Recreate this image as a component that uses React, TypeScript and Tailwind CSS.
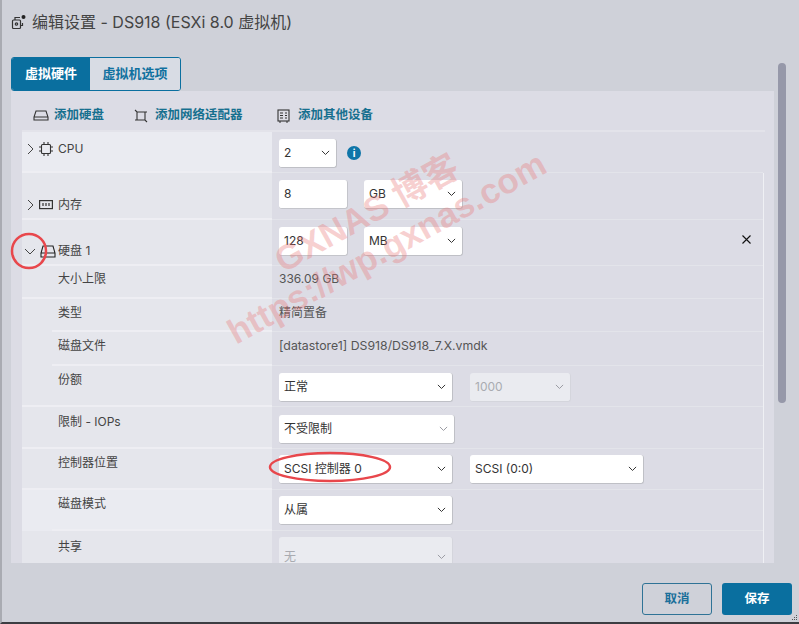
import React from "react";

const Chev = ({ cls = "text-[#333]", size = 9 }: { cls?: string; size?: number }) => (
  <svg width={size} height={size * 0.6} viewBox="0 0 10 6" fill="none" stroke="currentColor" strokeWidth="1.1" className={cls}>
    <path d="M1 1l4 4 4-4" />
  </svg>
);

const Sel = ({ w, v, disabled, h = "h-[29px]", light }: { w: string; v: string; disabled?: boolean; h?: string; light?: boolean }) => (
  <div className={`${w} ${h} shrink-0 flex items-center justify-between pl-[5px] pr-[6px] rounded-[3px] text-[12px] border-b border-r ${disabled ? "bg-[#eaebf0] text-[#a9abb1] border-[#d4d5dc]" : "bg-white text-[#333] border-[#bfc0c6]"}`}>
    <span>{v}</span>
    <Chev cls={disabled || light ? "text-[#9a9ba2]" : "text-[#333]"} />
  </div>
);

const Input = ({ v }: { v: string }) => (
  <div className="w-[69px] h-[29px] shrink-0 flex items-center pl-[5px] rounded-[3px] bg-white text-[12px] text-[#333] border-b border-r border-[#c4c5cb]">{v}</div>
);

const Right = ({ children, pt, gap = "gap-[17px]" }: { children: React.ReactNode; pt: string; gap?: string }) => (
  <div className={`flex-1 flex items-start pl-[7px] ${pt} ${gap}`}>{children}</div>
);

const Row = ({ label, h, line, labelPt, right, icon, arrow, lighter, noEdge }: {
  label: string; h: string; line?: "full" | "sub"; labelPt: string; right: React.ReactNode; icon?: React.ReactNode; arrow?: "r" | "d"; lighter?: boolean; noEdge?: boolean;
}) => (
  <div className={`flex ${h} shrink-0 relative border-r ${noEdge ? "border-transparent" : "border-[#eff0f4]"}`}>
    <div className={`w-[250px] shrink-0 flex items-start ${lighter ? "bg-[#eaebf1]" : "bg-[#e5e6ec]"} ${labelPt}`}>
      {arrow ? (
        <div className={`w-[36px] flex items-center h-[16px] ${arrow === "r" ? "pl-[5px] gap-[5px]" : "pl-[2px] gap-[4px]"}`}>
          {arrow === "r" ? (
            <svg width="7" height="12" viewBox="0 0 7 12" fill="none" stroke="#444" strokeWidth="1" className="shrink-0"><path d="M1 1l5 5-5 5" /></svg>
          ) : (
            <svg width="12" height="7" viewBox="0 0 12 7" fill="none" stroke="#444" strokeWidth="1" className="shrink-0"><path d="M1 1l5 5 5-5" /></svg>
          )}
          {icon}
        </div>
      ) : (
        <div className="w-[36px]" />
      )}
      <span className="text-[12px] leading-[16px] text-[#444]">{label}</span>
    </div>
    {right}
    {line && (
      <>
        <div className={`absolute bottom-0 w-auto right-[calc(100%-250px)] h-[2px] bg-[#eeeef3] ${line === "full" ? "left-0" : "left-[30px]"}`} />
        <div className="absolute bottom-0 left-[250px] right-0 h-[1px] bg-[#e3e4ea]" />
      </>
    )}
  </div>
);

export default function App() {
  const ff = { fontFamily: '"Inter","Noto Sans CJK SC",sans-serif' };
  return (
    <div className="relative w-[799px] h-[624px] overflow-hidden bg-[#cfd1d9] flex flex-col border-l-2 border-b-2 border-l-[#a9abb2] border-b-[#3c3d42]" style={ff}>
      {/* header */}
      <div className="h-[57px] shrink-0 flex items-center pl-[9px] pb-[13px] gap-[5px]">
        <svg width="16" height="16" viewBox="0 0 16 16" fill="none" stroke="#333" strokeWidth="1.2" className="shrink-0">
          <rect x="1.5" y="6" width="8" height="8.5" rx="1" />
          <path d="M4 6V3.5h5M11.5 9v2.5H9.5" />
          <circle cx="5.5" cy="10" r="1.2" />
          <circle cx="12.5" cy="3" r="2" fill="#222" stroke="none" />
        </svg>
        <span className="text-[16px] text-[#444] leading-[20px]">编辑设置 - DS918 (ESXi 8.0 虚拟机)</span>
      </div>
      {/* tabs */}
      <div className="h-[34px] shrink-0 ml-[9px] flex w-[170px] rounded-[3px] border border-[#0b6f9f] overflow-hidden text-[13px] font-bold">
        <div className="w-[78px] bg-[#0a6f9f] text-white flex items-center justify-center">虚拟硬件</div>
        <div className="flex-1 bg-[#d8dce4] text-[#11719f] flex items-center justify-center">虚拟机选项</div>
      </div>
      {/* panel */}
      <div className="flex shrink-0 h-[472px]">
        <div className="ml-[9px] w-[763px] h-[472px] bg-[#dcdce5] flex flex-col overflow-hidden pl-[11px]">
          {/* toolbar */}
          <div className="h-[41px] shrink-0 flex items-center pt-[10px] text-[12.5px] font-bold text-[#17708f] border-b-2 border-[#e3e3ea] mr-[9px]">
            <div className="flex items-center gap-[5px] ml-[11px] w-[101px]">
              <svg width="16" height="11" viewBox="0 0 16 11" fill="none" stroke="#333" strokeWidth="1.1"><path d="M3 1h10l2 6v3H1V7zM1 7h14" /></svg>
              添加硬盘
            </div>
            <div className="flex items-center gap-[7px] w-[143px]">
              <svg width="14" height="14" viewBox="0 0 14 14" fill="none" stroke="#333" strokeWidth="1.1"><path d="M1 1l2 2h8v8M3 3v8h8l2 2M3 11H1M11 3h2" /></svg>
              添加网络适配器
            </div>
            <div className="flex items-center gap-[8px]">
              <svg width="13" height="14" viewBox="0 0 13 14" fill="none" stroke="#333" strokeWidth="1.1"><rect x="1" y="1" width="11" height="11" /><path d="M3 4h3M3 6.5h3M3 9h3M8 4h2M8 6.5h2M8 9h2M2 13h2M9 13h2" /></svg>
              添加其他设备
            </div>
          </div>
          {/* rows */}
          <div className="flex flex-col w-[742px]">
            <Row label="CPU" h="h-[41px]" line="full" labelPt="pt-[9px]" arrow="r" lighter noEdge
              icon={<svg width="14" height="14" viewBox="0 0 14 14" fill="none" stroke="#333" strokeWidth="1.1" className="shrink-0"><rect x="2.5" y="2.5" width="9" height="9" rx="1" /><path d="M0 5h2M0 9h2M12 5h2M12 9h2M5 0v2M9 0v2M5 12v2M9 12v2" /></svg>}
              right={
                <Right pt="pt-[7px]" gap="gap-[10px]">
                  <Sel w="w-[58px]" v="2" />
                  <div className="w-[14px] h-[14px] mt-[7px] rounded-full bg-[#0f75a8] text-white text-[10px] font-bold flex items-center justify-center">i</div>
                </Right>
              } />
            <Row label="内存" h="h-[47px]" line="full" labelPt="pt-[24px]" arrow="r"
              icon={<svg width="14" height="10" viewBox="0 0 14 10" fill="none" stroke="#333" strokeWidth="1.2" className="shrink-0"><rect x="0.6" y="0.6" width="12.8" height="8" /><path d="M4 3v3M7 3v3M10 3v3" /></svg>}
              right={
                <Right pt="pt-[7px]" gap="gap-[16px]">
                  <Input v="8" />
                  <Sel w="w-[99px]" v="GB" />
                </Right>
              } />
            <Row label="硬盘 1" h="h-[46px]" line="full" labelPt="pt-[23px]" arrow="d"
              icon={<svg width="16" height="13" viewBox="0 0 16 13" fill="none" stroke="#222" strokeWidth="1.1" className="shrink-0"><path d="M3 1h10l2 7v4H1V8zM1 8h14" /></svg>}
              right={
                <div className="flex-1 flex items-start pl-[7px] pt-[7px] gap-[16px]">
                  <Input v="128" />
                  <Sel w="w-[99px]" v="MB" />
                  <svg width="9" height="9" viewBox="0 0 9 9" fill="none" stroke="#111" strokeWidth="1.1" className="ml-[263px] mt-[8px]"><path d="M0.5 0.5l8 8M8.5 0.5l-8 8" /></svg>
                </div>
              } />
            <Row label="大小上限" h="h-[33px]" line="full" labelPt="pt-[5px]"
              right={<Right pt="pt-[5px]"><span className="text-[12px] leading-[16px] text-[#555]">336.09 GB</span></Right>} />
            <Row label="类型" h="h-[33px]" line="sub" labelPt="pt-[6px]"
              right={<Right pt="pt-[6px]"><span className="text-[12px] leading-[16px] text-[#555]">精简置备</span></Right>} />
            <Row label="磁盘文件" h="h-[34px]" line="sub" labelPt="pt-[6px]"
              right={<Right pt="pt-[6px]"><span className="text-[12.3px] leading-[16px] text-[#555]">[datastore1] DS918/DS918_7.X.vmdk</span></Right>} />
            <Row label="份额" h="h-[41px]" line="full" labelPt="pt-[6px]"
              right={
                <Right pt="pt-[7px]">
                  <Sel w="w-[174px]" v="正常" />
                  <Sel w="w-[101px]" v="1000" disabled />
                </Right>
              } />
            <Row label="限制 - IOPs" h="h-[42px]" line="full" labelPt="pt-[7px]"
              right={<Right pt="pt-[8px]"><Sel w="w-[176px]" v="不受限制" light /></Right>} />
            <Row label="控制器位置" h="h-[41px]" line="full" labelPt="pt-[6px]"
              right={
                <Right pt="pt-[6px]">
                  <Sel w="w-[174px]" v="SCSI 控制器 0" />
                  <Sel w="w-[174px]" v="SCSI (0:0)" />
                </Right>
              } />
            <Row label="磁盘模式" h="h-[41px]" line="sub" labelPt="pt-[6px]" lighter
              right={<Right pt="pt-[6px]"><Sel w="w-[174px]" v="从属" /></Right>} />
            <Row label="共享" h="h-[40px]" labelPt="pt-[8px]"
              right={<Right pt="pt-[6px]"><Sel w="w-[174px]" v="无" disabled h="h-[40px]" /></Right>} />
          </div>
        </div>
        <div className="ml-[4px] -mt-[28px] w-[8px] h-[340px] rounded-[4px] bg-[#9698a9] shrink-0" />
      </div>
      {/* footer */}
      <div className="flex-1 flex items-start justify-end gap-[10px] pr-[7px] pt-[20px] text-[12.5px] font-bold">
        <div className="w-[70px] h-[32px] rounded-[3px] border border-[#2f7396] text-[#1a6f9a] flex items-center justify-center">取消</div>
        <div className="w-[70px] h-[32px] rounded-[3px] bg-[#0a6f9f] text-white flex items-center justify-center">保存</div>
      </div>

      {/* resize handle */}
      <svg width="8" height="8" viewBox="0 0 8 8" fill="#555" className="absolute right-0 bottom-0">
        <rect x="5" y="1" width="1" height="1" /><rect x="3" y="3" width="1" height="1" /><rect x="5" y="3" width="1" height="1" />
        <rect x="1" y="5" width="1" height="1" /><rect x="3" y="5" width="1" height="1" /><rect x="5" y="5" width="1" height="1" />
      </svg>

      {/* watermark */}
      <div className="absolute left-[238px] top-[272px] -rotate-[29deg] origin-bottom-left text-[35px] font-bold leading-[40px] whitespace-nowrap text-[#e87878]/35 pointer-events-none" style={{ fontFamily: '"Liberation Sans","Noto Sans CJK SC",sans-serif' }}>
        <div className="pl-[76px]">GXNAS 博客</div>
        <div>https://wp.gxnas.com</div>
      </div>

      {/* annotation */}
      <svg width="799" height="624" className="absolute -left-[2px] top-0 pointer-events-none" fill="none" stroke="#e8474c" strokeWidth="2.5">
        <circle cx="29" cy="251" r="17" />
        <ellipse cx="330" cy="467" rx="60" ry="14" />
      </svg>
    </div>
  );
}
